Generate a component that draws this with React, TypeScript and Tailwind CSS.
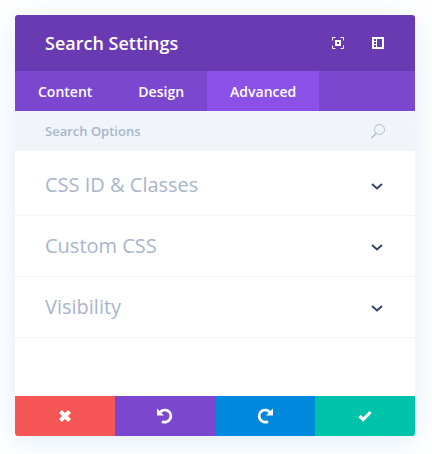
const tabs = ['Content', 'Design', 'Advanced']
const rows = ['CSS ID & Classes', 'Custom CSS', 'Visibility']

function ExpandIcon() {
  return (
    <svg width="12" height="12" viewBox="0 0 12 12" fill="none" stroke="white">
      <path d="M.5 3.5V.5h3M8.5.5h3v3M11.5 8.5v3h-3M3.5 11.5h-3v-3" />
      <rect x="4" y="4" width="4" height="4" strokeWidth="2" />
    </svg>
  )
}

function SidebarIcon() {
  return (
    <svg width="12" height="12" viewBox="0 0 12 12">
      <path
        fill="white"
        fillRule="evenodd"
        d="M0 0h12v12H0zM5 2v8h5V2zM2 2v2h2V2zM2 5v2h2V5zM2 8v2h2V8z"
      />
    </svg>
  )
}

function SearchIcon() {
  return (
    <svg width="16" height="16" viewBox="0 0 16 16" fill="none" stroke="#b3bed3">
      <circle cx="9.5" cy="6.5" r="5" />
      <path d="M6 10.5 1.5 15" strokeWidth="1.6" />
    </svg>
  )
}

function Chevron() {
  return (
    <svg width="12" height="7" viewBox="0 0 12 7" fill="none" className="mt-[3px]">
      <path d="M1 1l5 4.4L11 1" stroke="#32456b" strokeWidth="2" />
    </svg>
  )
}

function CloseIcon() {
  return (
    <svg width="14" height="14" viewBox="0 0 14 14" stroke="white" strokeWidth="4">
      <path d="M2.5 2.5l9 9M11.5 2.5l-9 9" />
    </svg>
  )
}

function UndoIcon() {
  return (
    <svg width="16" height="16" viewBox="0 0 16 16" fill="none">
      <path d="M3.2 4.2A6 6 0 1 1 5 13.4" stroke="white" strokeWidth="2.8" />
      <path d="M0 0.5 7 7.5H0z" fill="white" />
    </svg>
  )
}

function RedoIcon() {
  return (
    <svg width="16" height="16" viewBox="0 0 16 16" fill="none">
      <path d="M12.8 4.2A6 6 0 1 0 11 13.4" stroke="white" strokeWidth="2.8" />
      <path d="M16 0.5 9 7.5h7z" fill="white" />
    </svg>
  )
}

function CheckIcon() {
  return (
    <svg width="14" height="12" viewBox="0 0 14 12" fill="none">
      <path d="M1.5 6 5.2 9.6 12.6 2" stroke="white" strokeWidth="3.2" />
    </svg>
  )
}

export default function App() {
  return (
    <div className="h-[454px] w-[432px] bg-white p-[15px] font-['Open_Sans',sans-serif]">
      <div className="flex h-[421px] w-[400px] flex-col overflow-hidden rounded-[3px] bg-white shadow-[0_5px_30px_rgba(43,135,218,0.15)]">
        {/* Header */}
        <div className="flex h-[56px] shrink-0 items-center justify-between bg-[#6a3ab2] pl-[30px] pr-[31px]">
          <h1 className="text-[18px] font-semibold text-white">Search Settings</h1>
          <div className="flex items-center gap-[28px]">
            <ExpandIcon />
            <SidebarIcon />
          </div>
        </div>

        {/* Tabs */}
        <div className="flex h-[40px] shrink-0 bg-[#7c47cf]">
          {tabs.map((tab) => (
            <div
              key={tab}
              className={`flex items-center px-[23px] text-[14px] font-semibold text-white ${
                tab === 'Advanced' ? 'bg-[#8a50e8]' : ''
              }`}
            >
              {tab}
            </div>
          ))}
        </div>

        {/* Search */}
        <div className="flex h-[40px] shrink-0 items-center justify-between bg-[#f1f5f9] bg-[radial-gradient(#e2e8f0_0.6px,transparent_0.7px)] bg-[length:8px_13px] pl-[30px] pr-[29px]">
          <span className="pt-px text-[13px] font-semibold text-[#a9b5ca]">Search Options</span>
          <SearchIcon />
        </div>

        {/* Option groups */}
        <div className="flex-1 pt-[4px]">
          {rows.map((row) => (
            <div
              key={row}
              className="flex h-[61px] items-center justify-between border-b border-[#f1f5f9] pl-[30px] pr-[32px]"
            >
              <span className="text-[20px] text-[#a9b5ca]">{row}</span>
              <Chevron />
            </div>
          ))}
        </div>

        {/* Footer */}
        <div className="grid h-[40px] shrink-0 grid-cols-4">
          <div className="flex items-center justify-center bg-[#f75656]">
            <CloseIcon />
          </div>
          <div className="flex items-center justify-center bg-[#7c47cf]">
            <UndoIcon />
          </div>
          <div className="flex items-center justify-center bg-[#0088dc]">
            <RedoIcon />
          </div>
          <div className="flex items-center justify-center bg-[#00c3a9]">
            <CheckIcon />
          </div>
        </div>
      </div>
    </div>
  )
}
